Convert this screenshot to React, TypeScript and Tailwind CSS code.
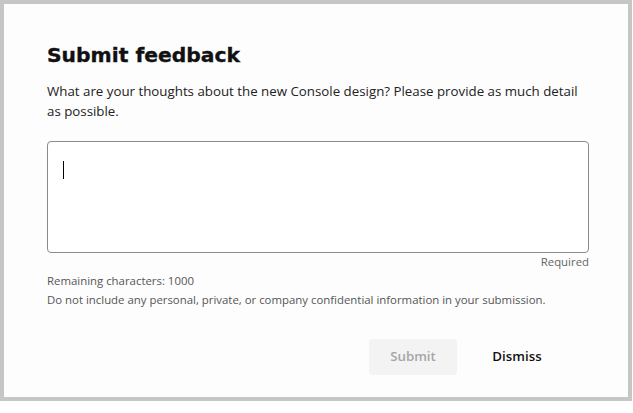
import React from "react";

export default function App() {
  const body = { fontFamily: '"Open Sans", "Noto Sans", sans-serif' };
  return (
    <div className="w-[633px] h-[413px] bg-white">
      <div className="w-[632px] h-[401px] border-4 border-[#c6c6c6] bg-[#fdfdfd]" style={body}>
        <div className="pl-[43px] pr-[39px] pt-[39px]">
          <h1
            className="text-[20.3px] leading-[24px] font-bold text-[#111] [-webkit-text-stroke:0.35px_#111]"
            style={{ fontFamily: '"DejaVu Sans", "Liberation Sans", sans-serif' }}
          >
            Submit feedback
          </h1>
          <p className="mt-[14px] text-[13.3px] leading-5 text-[#222]">
            What are your thoughts about the new Console design? Please provide as much detail as possible.
          </p>
          <div className="mt-[20px] h-[112px] w-[542px] rounded-[4px] border border-[#8a8a8a] bg-white px-[15px] pt-[19px]">
            <div className="h-[18px] w-px bg-black" />
          </div>
          <div className="w-[542px] text-right text-[11.4px] leading-[18px] text-[#666]">Required</div>
          <div className="text-[11.4px] leading-[19px] text-[#555]">Remaining characters: 1000</div>
          <div className="text-[11.4px] leading-[19px] text-[#555]">
            Do not include any personal, private, or company confidential information in your submission.
          </div>
          <div className="mt-[30px] flex w-[542px] justify-end pr-[24px]">
            <button className="h-[36px] w-[88px] rounded-[4px] bg-[#f3f3f3] text-[13.3px] font-semibold text-[#a6a6a6]">
              Submit
            </button>
            <button className="ml-[12px] h-[36px] w-[96px] text-[13.3px] font-semibold text-[#111]">
              Dismiss
            </button>
          </div>
        </div>
      </div>
    </div>
  );
}
